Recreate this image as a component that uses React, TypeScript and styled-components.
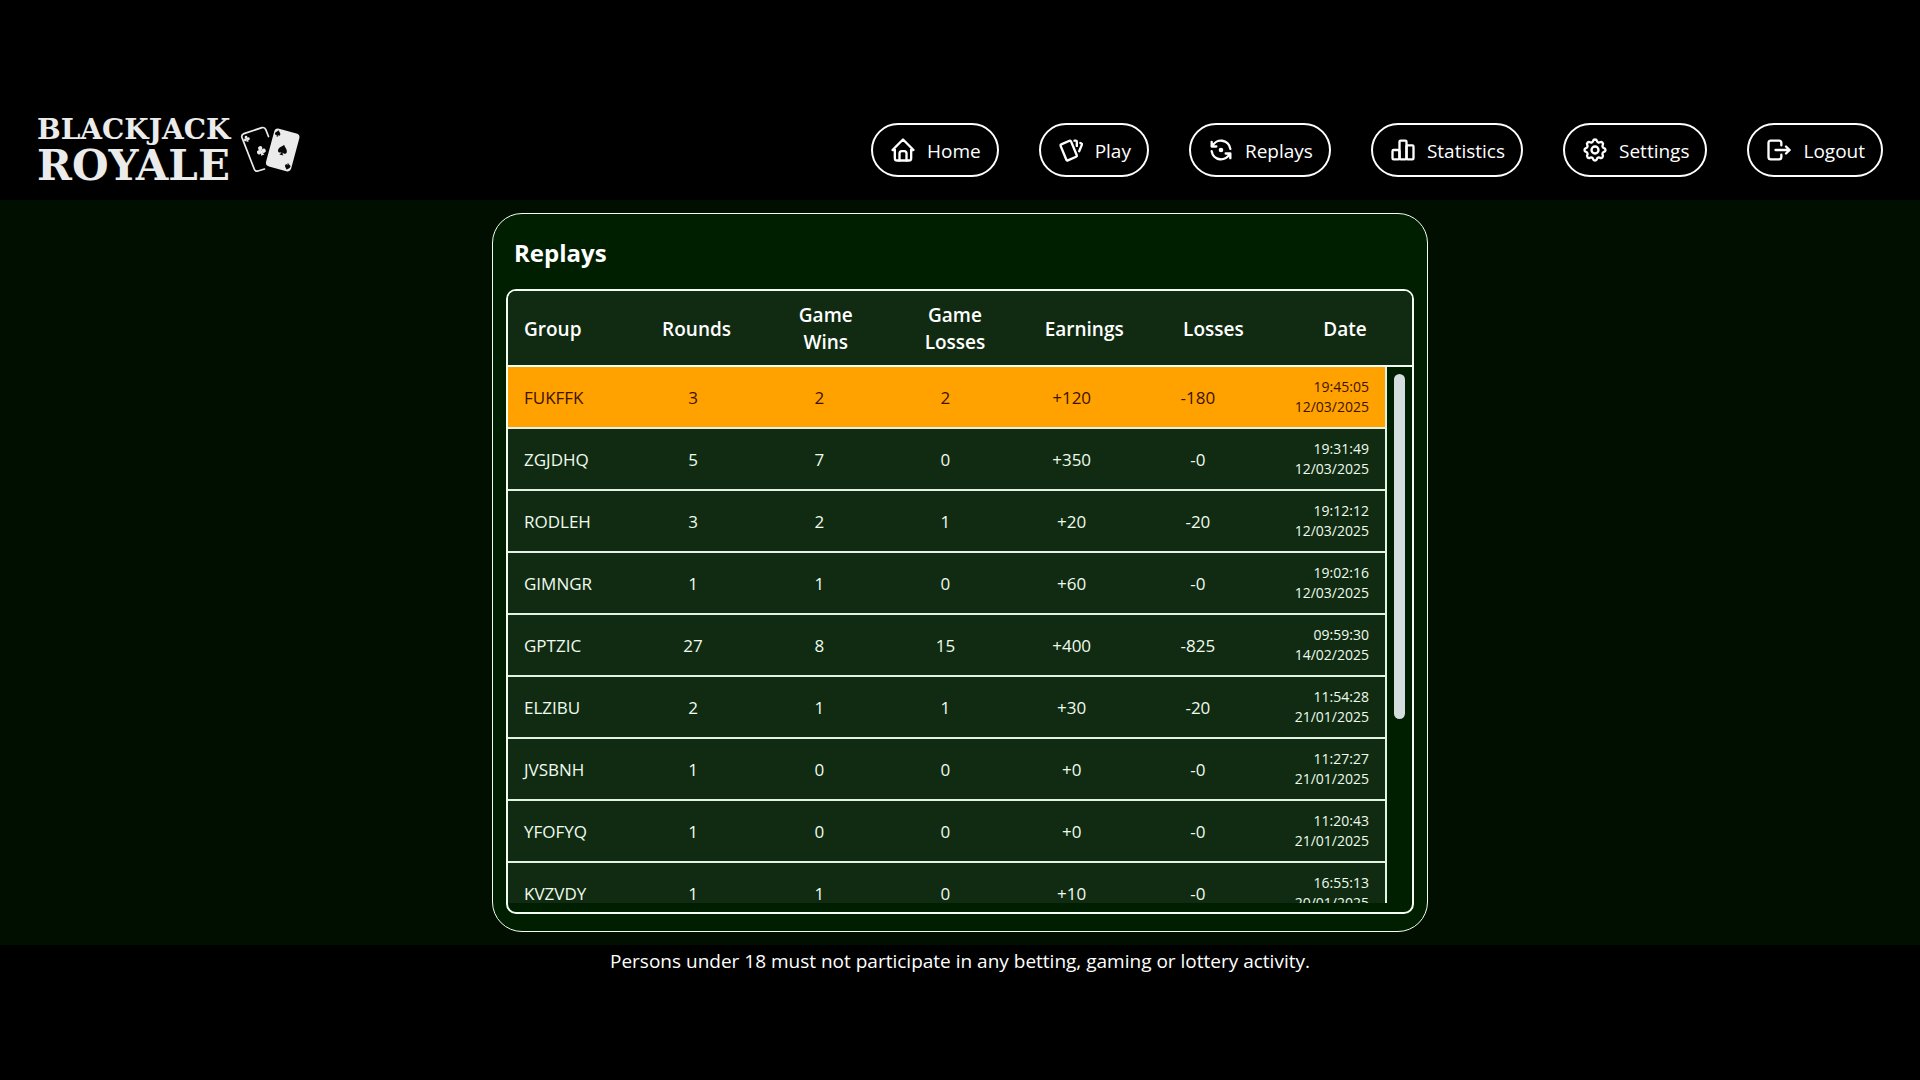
import React from "react";
import styled, { createGlobalStyle } from "styled-components";
import { TbCards, TbHome, TbLogout, TbRefreshDot, TbSettings } from "react-icons/tb";

const GlobalStyle = createGlobalStyle`
  *, *::before, *::after { box-sizing: border-box; }
  body {
    margin: 0;
    background: #000;
    color: #fff;
    font-family: "Open Sans", "Noto Sans", sans-serif;
  }
`;

const Page = styled.div`
  height: 100vh;
  min-height: 640px;
  padding: 100px 0;
  display: flex;
  flex-direction: column;
`;

const Header = styled.header`
  flex: none;
  height: 100px;
  padding: 0 37px;
  display: flex;
  align-items: center;
  justify-content: space-between;
  gap: 40px;
`;

const Brand = styled.a`
  display: flex;
  align-items: center;
  gap: 10px;
  color: #ebebeb;
  text-decoration: none;
`;

const BrandText = styled.span`
  display: flex;
  flex-direction: column;
  font-family: "DejaVu Serif", serif;
  font-weight: 700;
`;

const BrandTop = styled.span`
  font-size: 28px;
  line-height: 31px;
`;

const BrandBottom = styled.span`
  font-size: 42px;
  line-height: 42px;
`;

const Nav = styled.nav`
  display: flex;
  gap: 40px;
`;

const NavButton = styled.button`
  height: 54px;
  padding: 0 16px;
  display: flex;
  align-items: center;
  gap: 10px;
  border: 2px solid #fff;
  border-radius: 27px;
  background: #000;
  color: #fff;
  font-family: inherit;
  font-size: 19px;
  line-height: 26px;
  cursor: pointer;

  svg {
    width: 28px;
    height: 28px;
    flex: none;
  }
`;

const NavLabel = styled.span`
  padding-top: 2px;
`;

const Main = styled.main`
  flex: 1;
  min-height: 0;
  padding: 13px 24px;
  display: flex;
  justify-content: center;
  background: #000f00;
`;

const Card = styled.section`
  width: 100%;
  max-width: 936px;
  padding: 14px 13px 17px;
  display: flex;
  flex-direction: column;
  border: 1px solid #f2fff2;
  border-radius: 30px;
  background: #001e00;
`;

const Title = styled.h1`
  margin: 0;
  padding: 9px 8px 20px;
  font-size: 24px;
  line-height: 32px;
  font-weight: 700;
`;

const Frame = styled.div`
  flex: 1;
  min-height: 0;
  padding-bottom: 9px;
  display: flex;
  flex-direction: column;
  overflow: hidden;
  border: 2px solid #f2fff2;
  border-radius: 10px;
`;

const Table = styled.table`
  width: 100%;
  table-layout: fixed;
  border-collapse: separate;
  border-spacing: 0;
`;

const Col = styled.col<{ $width?: number }>`
  width: ${(p) => (p.$width ? `${p.$width}px` : "auto")};
`;

const HeadCell = styled.th<{ $align?: string }>`
  height: 76px;
  padding: 2px 16px 0;
  border-bottom: 2px solid #f2fff2;
  background: #112b12;
  font-size: 19px;
  line-height: 27px;
  font-weight: 600;
  text-align: ${(p) => p.$align ?? "center"};
`;

const Body = styled.div`
  flex: 1;
  min-height: 0;
  display: flex;
`;

const Viewport = styled.div`
  flex: 1;
  overflow-y: auto;
  scrollbar-width: none;
  border-right: 2px solid #e4f2e4;
`;

const Row = styled.tr<{ $active: boolean }>`
  background: ${(p) => (p.$active ? "#ffa200" : "#112b12")};
  color: ${(p) => (p.$active ? "#3d1200" : "#eefbee")};
  cursor: pointer;
`;

const Cell = styled.td<{ $align?: string }>`
  height: 62px;
  padding: 2px 16px 0;
  border-bottom: 2px solid #e4f2e4;
  font-size: 17px;
  line-height: 24px;
  text-align: ${(p) => p.$align ?? "center"};
`;

const DateCell = styled(Cell)`
  padding: 0 16px 0 0;
  font-size: 14px;
  line-height: 20px;
  text-align: right;
`;

const Track = styled.div`
  flex: none;
  width: 25px;
  padding: 7px;
`;

const Thumb = styled.div`
  width: 11px;
  height: 66%;
  border-radius: 6px;
  background: #d3dddd;
`;

const Footer = styled.footer`
  flex: none;
  height: 35px;
  padding-top: 3px;
  font-size: 19px;
  line-height: 27px;
  text-align: center;
`;

const ChartIcon = () => (
  <svg viewBox="0 0 24 24" fill="none" stroke="currentColor" strokeWidth="2" strokeLinecap="round" strokeLinejoin="round" aria-hidden="true">
    <rect x="3" y="12" width="6" height="8" rx="1" />
    <rect x="9" y="4" width="6" height="16" rx="1" />
    <rect x="15" y="8" width="6" height="12" rx="1" />
  </svg>
);

const SPADE = "M0-6C-1.6-3.4-5-1.8-5 1.2-5 3.8-2 4.4-.8 2.6-.9 4.2-1.4 5-2.4 5.8H2.4C1.4 5 .9 4.2.8 2.6 2 4.4 5 3.8 5 1.2 5-1.8 1.6-3.4 0-6Z";

const Club = () => (
  <>
    <circle cx="0" cy="-2.6" r="2.4" />
    <circle cx="-2.7" cy="1.2" r="2.4" />
    <circle cx="2.7" cy="1.2" r="2.4" />
    <path d="M-.8-1H.8C.8 2.6 1 4 2.2 5.4H-2.2C-1 4-.8 2.6-.8-1Z" />
  </>
);

const CardsLogo = () => (
  <svg width="60" height="50" viewBox="0 0 60 50" aria-hidden="true">
    <path
      d="M28.5 11.5L25.8 4.6Q24.8 2 22 2.6L4 8.6Q1 9.8 2 12.6L14.2 44Q15.2 46.8 18 46L24.5 44"
      fill="none"
      stroke="#ebebeb"
      strokeWidth="1.7"
      strokeLinecap="round"
    />
    <g fill="#ebebeb">
      <g transform="translate(6.6 13.6) rotate(-20) scale(.6)"><Club /></g>
      <g transform="translate(21 25.5) rotate(-20) scale(.9)"><Club /></g>
    </g>
    <g transform="translate(42.7 25) rotate(15)">
      <rect x="-13" y="-19.5" width="26" height="39" rx="4" fill="#ebebeb" />
      <g fill="#080808">
        <path d={SPADE} transform="scale(.9)" />
        <path d={SPADE} transform="translate(-9 -14.8) scale(.55)" />
        <path d={SPADE} transform="translate(9 14.8) rotate(180) scale(.55)" />
      </g>
    </g>
  </svg>
);

const NAV_ITEMS = [
  { label: "Home", Icon: TbHome },
  { label: "Play", Icon: TbCards },
  { label: "Replays", Icon: TbRefreshDot },
  { label: "Statistics", Icon: ChartIcon },
  { label: "Settings", Icon: TbSettings },
  { label: "Logout", Icon: TbLogout },
];

const REPLAYS = [
  ["FUKFFK", "3", "2", "2", "+120", "-180", "19:45:05", "12/03/2025"],
  ["ZGJDHQ", "5", "7", "0", "+350", "-0", "19:31:49", "12/03/2025"],
  ["RODLEH", "3", "2", "1", "+20", "-20", "19:12:12", "12/03/2025"],
  ["GIMNGR", "1", "1", "0", "+60", "-0", "19:02:16", "12/03/2025"],
  ["GPTZIC", "27", "8", "15", "+400", "-825", "09:59:30", "14/02/2025"],
  ["ELZIBU", "2", "1", "1", "+30", "-20", "11:54:28", "21/01/2025"],
  ["JVSBNH", "1", "0", "0", "+0", "-0", "11:27:27", "21/01/2025"],
  ["YFOFYQ", "1", "0", "0", "+0", "-0", "11:20:43", "21/01/2025"],
  ["KVZVDY", "1", "1", "0", "+10", "-0", "16:55:13", "20/01/2025"],
];

const Columns = ({ group, date }: { group: number; date: number }) => (
  <colgroup>
    <Col $width={group} />
    <Col />
    <Col />
    <Col />
    <Col />
    <Col />
    <Col $width={date} />
  </colgroup>
);

export default function App() {
  return (
    <Page>
      <GlobalStyle />
      <Header>
        <Brand href="#home">
          <BrandText>
            <BrandTop>BLACKJACK</BrandTop>
            <BrandBottom>ROYALE</BrandBottom>
          </BrandText>
          <CardsLogo />
        </Brand>
        <Nav>
          {NAV_ITEMS.map(({ label, Icon }) => (
            <NavButton key={label} type="button">
              <Icon />
              <NavLabel>{label}</NavLabel>
            </NavButton>
          ))}
        </Nav>
      </Header>
      <Main>
        <Card>
          <Title>Replays</Title>
          <Frame>
            <Table>
              <Columns group={124} date={134} />
              <thead>
                <tr>
                  <HeadCell $align="left">Group</HeadCell>
                  <HeadCell>Rounds</HeadCell>
                  <HeadCell>Game Wins</HeadCell>
                  <HeadCell>Game Losses</HeadCell>
                  <HeadCell>Earnings</HeadCell>
                  <HeadCell>Losses</HeadCell>
                  <HeadCell>Date</HeadCell>
                </tr>
              </thead>
            </Table>
            <Body>
              <Viewport>
                <Table>
                  <Columns group={122} date={124} />
                  <tbody>
                    {REPLAYS.map(([group, rounds, wins, lost, earned, losses, time, date], i) => (
                      <Row key={group} $active={i === 0}>
                        <Cell $align="left">{group}</Cell>
                        <Cell>{rounds}</Cell>
                        <Cell>{wins}</Cell>
                        <Cell>{lost}</Cell>
                        <Cell>{earned}</Cell>
                        <Cell>{losses}</Cell>
                        <DateCell>
                          {time}
                          <br />
                          {date}
                        </DateCell>
                      </Row>
                    ))}
                  </tbody>
                </Table>
              </Viewport>
              <Track>
                <Thumb />
              </Track>
            </Body>
          </Frame>
        </Card>
      </Main>
      <Footer>Persons under 18 must not participate in any betting, gaming or lottery activity.</Footer>
    </Page>
  );
}
